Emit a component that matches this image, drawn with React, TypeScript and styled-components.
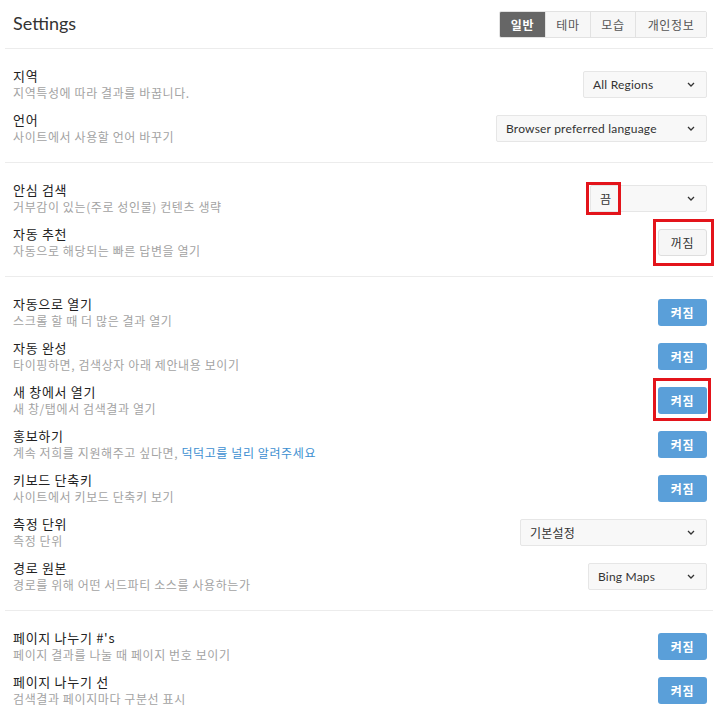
import React from "react";
import styled, { createGlobalStyle, css } from "styled-components";

const Global = createGlobalStyle`
  html, body { margin: 0; padding: 0; background: #fff; }
  body { font-family: "Noto Sans CJK KR", "Noto Sans", sans-serif; }
  * { box-sizing: border-box; }
`;

const Page = styled.div`
  position: relative;
  width: 720px;
  padding: 0 7px 0 5px;
`;

const Header = styled.header`
  height: 49px;
  display: flex;
  align-items: center;
  justify-content: space-between;
  padding: 0 6px 0 8px;
  border-bottom: 1px solid #ececec;
`;

const Title = styled.h1`
  margin: 0;
  font-family: Lato, "Open Sans", sans-serif;
  font-weight: 400;
  font-size: 18px;
  color: #333;
  transform: translateY(-1px);
`;

const Tabs = styled.div`
  display: flex;
  height: 27px;
  border: 1px solid #e2e2e2;
  border-radius: 2px;
  overflow: hidden;
`;

const Tab = styled.div<{ $active?: boolean; $w: number }>`
  width: ${(p) => p.$w}px;
  display: flex;
  align-items: center;
  justify-content: center;
  font-size: 12px;
  letter-spacing: 0.6px;
  border-left: 1px solid #e2e2e2;
  background: #f7f7f7;
  color: #555;
  &:first-child { border-left: none; }
  ${(p) =>
    p.$active &&
    css`
      background: #666;
      color: #fff;
      font-weight: 700;
    `}
`;

const Section = styled.section<{ $last?: boolean }>`
  padding: 18px 6px 7px 8px;
  border-bottom: ${(p) => (p.$last ? "none" : "1px solid #ececec")};
`;

const Row = styled.div`
  display: flex;
  align-items: center;
  justify-content: space-between;
  min-height: 34px;
  margin-bottom: 10px;
`;

const Texts = styled.div`
  display: flex;
  flex-direction: column;
`;

const Label = styled.div`
  font-size: 13px;
  line-height: 18px;
  letter-spacing: 0.7px;
  color: #222;
`;

const Desc = styled.div`
  font-size: 12px;
  line-height: 16px;
  letter-spacing: 0.6px;
  color: #a3a3a3;
`;

const Link = styled.span`
  color: #3d8fd1;
`;

const Toggle = styled.div<{ $on?: boolean }>`
  width: 49px;
  height: 27px;
  border-radius: 3px;
  display: flex;
  align-items: center;
  justify-content: center;
  font-size: 12px;
  letter-spacing: 0.6px;
  ${(p) =>
    p.$on
      ? css`
          background: #5a9fd9;
          color: #fff;
          font-weight: 700;
        `
      : css`
          background: #f6f6f6;
          border: 1px solid #dedede;
          color: #333;
        `}
`;

const Select = styled.div<{ $w: number }>`
  width: ${(p) => p.$w}px;
  height: 27px;
  background: #f8f8f8;
  border: 1px solid #e6e6e6;
  border-radius: 2px;
  display: flex;
  align-items: center;
  justify-content: space-between;
  padding: 0 11px 0 9px;
  font-family: Lato, "Noto Sans CJK KR", sans-serif;
  font-size: 12px;
  letter-spacing: 0.2px;
  color: #333;
`;

const Mark = styled.div<{ $x: number; $y: number; $w: number; $h: number }>`
  position: absolute;
  left: ${(p) => p.$x}px;
  top: ${(p) => p.$y}px;
  width: ${(p) => p.$w}px;
  height: ${(p) => p.$h}px;
  border: 3px solid #e3141b;
  pointer-events: none;
`;

const Chevron = () => (
  <svg width="8" height="5" viewBox="0 0 8 5" fill="none">
    <path d="M1 1l3 3 3-3" stroke="#333" strokeWidth="1.3" />
  </svg>
);

const Drop = ({ w, children }: { w: number; children: React.ReactNode }) => (
  <Select $w={w}>
    <span>{children}</span>
    <Chevron />
  </Select>
);

type Item = {
  label: string;
  desc: React.ReactNode;
  control: React.ReactNode;
};

const On = <Toggle $on>켜짐</Toggle>;

const sections: Item[][] = [
  [
    { label: "지역", desc: "지역특성에 따라 결과를 바꿉니다.", control: <Drop w={124}>All Regions</Drop> },
    { label: "언어", desc: "사이트에서 사용할 언어 바꾸기", control: <Drop w={211}>Browser preferred language</Drop> },
  ],
  [
    { label: "안심 검색", desc: "거부감이 있는(주로 성인물) 컨텐츠 생략", control: <Drop w={117}>끔</Drop> },
    { label: "자동 추천", desc: "자동으로 해당되는 빠른 답변을 열기", control: <Toggle>꺼짐</Toggle> },
  ],
  [
    { label: "자동으로 열기", desc: "스크롤 할 때 더 많은 결과 열기", control: On },
    { label: "자동 완성", desc: "타이핑하면, 검색상자 아래 제안내용 보이기", control: On },
    { label: "새 창에서 열기", desc: "새 창/탭에서 검색결과 열기", control: On },
    {
      label: "홍보하기",
      desc: (
        <>
          계속 저희를 지원해주고 싶다면, <Link>덕덕고를 널리 알려주세요</Link>
        </>
      ),
      control: On,
    },
    { label: "키보드 단축키", desc: "사이트에서 키보드 단축키 보기", control: On },
    { label: "측정 단위", desc: "측정 단위", control: <Drop w={187}>기본설정</Drop> },
    { label: "경로 원본", desc: "경로를 위해 어떤 서드파티 소스를 사용하는가", control: <Drop w={119}>Bing Maps</Drop> },
  ],
  [
    { label: "페이지 나누기 #'s", desc: "페이지 결과를 나눌 때 페이지 번호 보이기", control: On },
    { label: "페이지 나누기 선", desc: "검색결과 페이지마다 구분선 표시", control: On },
  ],
];

const tabs = [
  { t: "일반", w: 45, a: true },
  { t: "테마", w: 45 },
  { t: "모습", w: 45 },
  { t: "개인정보", w: 71 },
];

export default function App() {
  return (
    <Page>
      <Global />
      <Header>
        <Title>Settings</Title>
        <Tabs>
          {tabs.map((t) => (
            <Tab key={t.t} $w={t.w} $active={t.a}>
              {t.t}
            </Tab>
          ))}
        </Tabs>
      </Header>
      {sections.map((items, i) => (
        <Section key={i} $last={i === sections.length - 1}>
          {items.map((it) => (
            <Row key={it.label}>
              <Texts>
                <Label>{it.label}</Label>
                <Desc>{it.desc}</Desc>
              </Texts>
              {it.control}
            </Row>
          ))}
        </Section>
      ))}
      <Mark $x={586} $y={182} $w={35} $h={33} />
      <Mark $x={653} $y={219} $w={61} $h={47} />
      <Mark $x={653} $y={378} $w={58} $h={43} />
    </Page>
  );
}
